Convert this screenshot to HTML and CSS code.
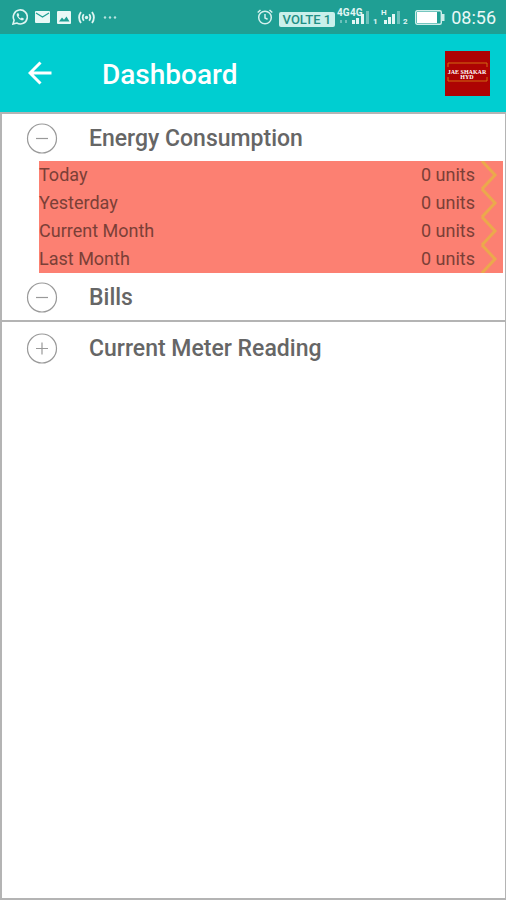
FILE: index.html
```html
<!DOCTYPE html>
<html lang="en">
<head>
    <meta charset="UTF-8">
    <meta name="viewport" content="width=device-width, initial-scale=1.0">
    <title>Dashboard</title>
    <link rel="stylesheet" href="styles.css">
</head>
<body>
    <div class="status-bar">
        <div class="status-left">
            <svg width="16" height="16" viewBox="0 0 16 16" fill="none" stroke="#dff5f2">
                <path d="M1 15l1.1-3.8A7 7 0 1 1 4.800 14z" stroke-width="1.600"/>
                <path d="M5.200 4.300c-1 1-.7 2.800 1.300 4.900 2.100 2.200 4.100 2.700 5.100 1.600l.2-1.200-2-1-1 .9c-1-.4-1.800-1.200-2.300-2.300l.8-.9-.8-2z" fill="#dff5f2" stroke="none"/>
            </svg>
            <svg width="15" height="12" viewBox="0 0 15 12">
                <rect width="15" height="12" rx="1" fill="#e9f8f6"/>
                <path d="M1 2l6.500 4L14 2" fill="none" stroke="#1f9f94" stroke-width="1.300"/>
            </svg>
            <svg width="14" height="13" viewBox="0 0 14 13">
                <rect width="14" height="13" rx="1" fill="#e9f8f6"/>
                <path d="M2 10.500l3-4 2 2.300 2.500-3.300 3 5z" fill="#1f9f94"/>
            </svg>
            <svg width="17" height="13" viewBox="0 0 17 13" fill="none" stroke="#dff5f2" stroke-width="1.800">
                <circle cx="8.500" cy="6.500" r="1.700" fill="#dff5f2" stroke="none"/>
                <path d="M5.800 3.300q-2.300 3.200 0 6.400M11.200 3.300q2.300 3.200 0 6.400M3 1Q-.8 6.500 3 12M14 1q3.800 5.500 0 11"/>
            </svg>
            <svg width="15" height="4" viewBox="0 0 15 4" fill="#b5e3de">
                <circle cx="3" cy="2.500" r="1.200"/><circle cx="8" cy="2.500" r="1.200"/><circle cx="13" cy="2.500" r="1.200"/>
            </svg>
        </div>
        <div class="status-right">
            <svg width="16" height="16" viewBox="0 0 16 16" fill="none" stroke="#d5f1ee" stroke-width="1.500">
                <circle cx="8" cy="8.500" r="6.300"/>
                <path d="M8 5v4l2.600 1.200M.7 3.500L3.500 1M15.300 3.500L12.500 1"/>
            </svg>
            <span class="volte">VOLTE 1</span>
            <svg class="signal" width="38" height="18" viewBox="0 0 38 18" fill="#e3f6f4">
                <text x="0" y="8" class="network">4G</text>
                <text x="13" y="8" class="network">4G</text>
                <path d="M3 12h2v3H3zM8 12h2v3H8z" opacity=".4"/>
                <path d="M15 12h3v4h-3zM19 10h3v6h-3zM24 6h3v10h-3z"/>
                <path d="M29 3h3v13h-3z" opacity=".4"/>
                <text x="36" y="16" class="sim">1</text>
            </svg>
            <svg class="signal" width="28" height="18" viewBox="0 0 28 18" fill="#e3f6f4">
                <text x="0" y="7" class="sim">H</text>
                <path d="M3 12h3v4H3zM7 9h3v7H7zM11 6h3v10h-3z"/>
                <path d="M16 3h3v13h-3z" opacity=".4"/>
                <text x="22" y="16" class="sim">2</text>
            </svg>
            <svg width="30" height="15" viewBox="0 0 30 15">
                <rect x=".7" y=".7" width="25.600" height="13.600" rx="1.500" fill="none" stroke="#cdeeea" stroke-width="1.400"/>
                <rect x="2" y="2" width="20" height="11" fill="#fff"/>
                <path d="M27 4h2.500v7H27z" fill="#cdeeea"/>
            </svg>
            <span class="clock">08:56</span>
        </div>
    </div>

    <header class="toolbar">
        <button class="back" type="button" aria-label="Back">
            <svg width="24" height="24" viewBox="0 0 24 24" fill="none" stroke="#fff" stroke-width="3">
                <path d="M23.500 12H2M12.500 1.500L2 12l10.500 10.500"/>
            </svg>
        </button>
        <h1>Dashboard</h1>
        <svg class="logo" width="45" height="45" viewBox="0 0 45 45" role="img" aria-label="Logo">
            <rect width="45" height="45" fill="#ad0303"/>
            <path d="M3 16v-4h39v4M3 26v4h39v-4" fill="none" stroke="#d06a12"/>
            <text x="22" y="23" class="logo-text">JAE SHAKAR</text>
            <text x="22" y="28" class="logo-text">HYD</text>
        </svg>
    </header>

    <main class="panels">
        <section class="panel">
            <h2>
                <button class="panel-title" type="button" aria-expanded="true">
                    <svg width="32" height="32" viewBox="0 0 32 32" fill="none" stroke="#999">
                        <circle cx="16" cy="15.500" r="14.500" stroke-width="1.200"/>
                        <path d="M10 15.500h12" stroke-width="1.200"/>
                    </svg>
                    Energy Consumption
                </button>
            </h2>
            <table class="usage">
                <tr>
                    <th scope="row">Today</th>
                    <td>0 units</td>
                    <td class="more"><svg width="18" height="28" viewBox="0 0 18 28"><path d="M2 0l13 14L2 28"/></svg></td>
                </tr>
                <tr>
                    <th scope="row">Yesterday</th>
                    <td>0 units</td>
                    <td class="more"><svg width="18" height="28" viewBox="0 0 18 28"><path d="M2 0l13 14L2 28"/></svg></td>
                </tr>
                <tr>
                    <th scope="row">Current Month</th>
                    <td>0 units</td>
                    <td class="more"><svg width="18" height="28" viewBox="0 0 18 28"><path d="M2 0l13 14L2 28"/></svg></td>
                </tr>
                <tr>
                    <th scope="row">Last Month</th>
                    <td>0 units</td>
                    <td class="more"><svg width="18" height="28" viewBox="0 0 18 28"><path d="M2 0l13 14L2 28"/></svg></td>
                </tr>
            </table>
            <h2>
                <button class="panel-title" type="button" aria-expanded="true">
                    <svg width="32" height="32" viewBox="0 0 32 32" fill="none" stroke="#999">
                        <circle cx="16" cy="15.500" r="14.500" stroke-width="1.200"/>
                        <path d="M10 15.500h12" stroke-width="1.200"/>
                    </svg>
                    Bills
                </button>
            </h2>
        </section>
        <section class="panel panel-last">
            <h2>
                <button class="panel-title" type="button" aria-expanded="false">
                    <svg width="32" height="32" viewBox="0 0 32 32" fill="none" stroke="#999">
                        <circle cx="16" cy="15.500" r="14.500" stroke-width="1.200"/>
                        <path d="M10 15.500h12M16 9.500v12" stroke-width="1.200"/>
                    </svg>
                    Current Meter Reading
                </button>
            </h2>
        </section>
    </main>
</body>
</html>
```
FILE: styles.css
```css
* {
  margin: 0;
  padding: 0;
  box-sizing: border-box;
}

body {
  font-family: Roboto, sans-serif;
  display: flex;
  flex-direction: column;
  min-height: 100vh;
  background-color: #fff;
}

button {
  border: none;
  background: none;
  font: inherit;
  color: inherit;
  cursor: pointer;
}

svg {
  display: block;
  flex-shrink: 0;
}

/* Status bar */
.status-bar {
  display: flex;
  justify-content: space-between;
  align-items: center;
  height: 34px;
  padding: 0 10px 0 12px;
  background-color: #1f9f94;
}

.status-left,
.status-right {
  display: flex;
  align-items: center;
  gap: 7px;
}

.status-right {
  gap: 6px;
}

.volte {
  margin-top: 5px;
  padding: 0 4px;
  border-radius: 2px;
  background-color: #c9f0eb;
  color: #1f8f85;
  font-size: 13px;
  font-weight: 500;
  line-height: 15px;
}

.volte + .signal {
  margin-left: -4px;
}

.signal {
  overflow: visible;
}

.network {
  font-size: 10px;
  font-weight: 700;
}

.sim {
  font-size: 8px;
  font-weight: 700;
}

.clock {
  color: #e9f8f6;
  font-size: 18px;
}

/* Toolbar */
.toolbar {
  display: flex;
  align-items: center;
  height: 78px;
  padding: 0 16px 0 28px;
  background-color: #00ced1;
}

.toolbar h1 {
  flex: 1;
  margin-left: 50px;
  padding-top: 2px;
  color: #fff;
  font-size: 28px;
  font-weight: 500;
}

.logo-text {
  fill: #fff;
  font-family: "Liberation Serif", serif;
  font-size: 6px;
  font-weight: 700;
  text-anchor: middle;
}

/* Panels */
.panels {
  flex: 1;
  display: flex;
  flex-direction: column;
  border: 2px solid #b4b4b4;
  border-right-width: 1px;
}

.panel-last {
  flex: 1;
  padding-top: 2px;
  border-top: 2px solid #b4b4b4;
}

.panel-title {
  display: flex;
  align-items: center;
  gap: 31px;
  width: 100%;
  height: 47px;
  padding: 2px 0 0 24px;
  color: #666;
  font-size: 23px;
  font-weight: 500;
  text-align: left;
}

.usage {
  width: calc(100% - 39px);
  margin-left: 37px;
  border-collapse: collapse;
  background-color: #fc8072;
  color: #7b3f37;
  font-size: 18px;
  line-height: 28px;
}

.usage th {
  font-weight: 400;
  text-align: left;
}

.usage td {
  text-align: right;
}

.usage .more {
  width: 28px;
  padding-left: 5px;
}

.more path {
  fill: none;
  stroke: #eba94c;
  stroke-width: 3;
}
```
